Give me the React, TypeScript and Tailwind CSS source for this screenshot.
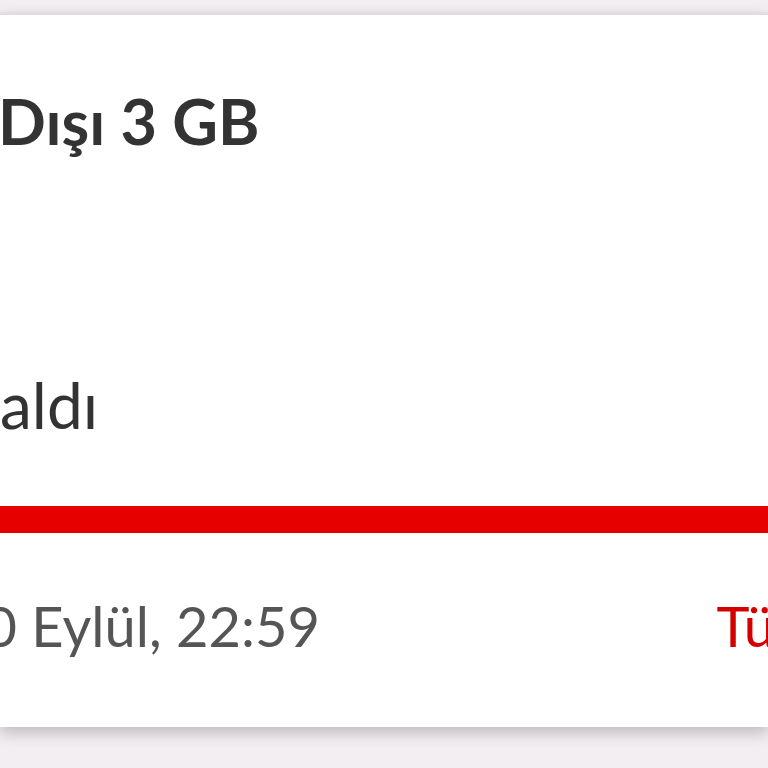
export default function App() {
  return (
    <div className="h-[768px] w-[768px] overflow-hidden bg-[#f3eef2] pt-[12px] font-['Lato',sans-serif]">
      <div className="h-[715px] overflow-hidden border-t-[3px] border-[#e2dde1] bg-white shadow-[0_6px_14px_rgba(0,0,0,0.22)]">
        <div className="pt-[66px]">
          <h2 className="-ml-[2px] whitespace-nowrap text-[63px] font-bold leading-[80px] text-[#333333]">Dışı 3 GB</h2>
        </div>
        <p className="mt-[209px] whitespace-nowrap text-[64px] leading-[70px] text-[#333333]">aldı</p>
        <div className="mt-[66px] h-[27px] w-full bg-[#e60000]" />
        <div className="mt-[58px] flex items-center whitespace-nowrap text-[56px] leading-[70px]">
          <span className="-ml-[48px] text-[#555555]">30 Eylül, 22:59</span>
          <span className="-mr-[53px] ml-auto text-[#d40000]">Tüm</span>
        </div>
      </div>
    </div>
  );
}
